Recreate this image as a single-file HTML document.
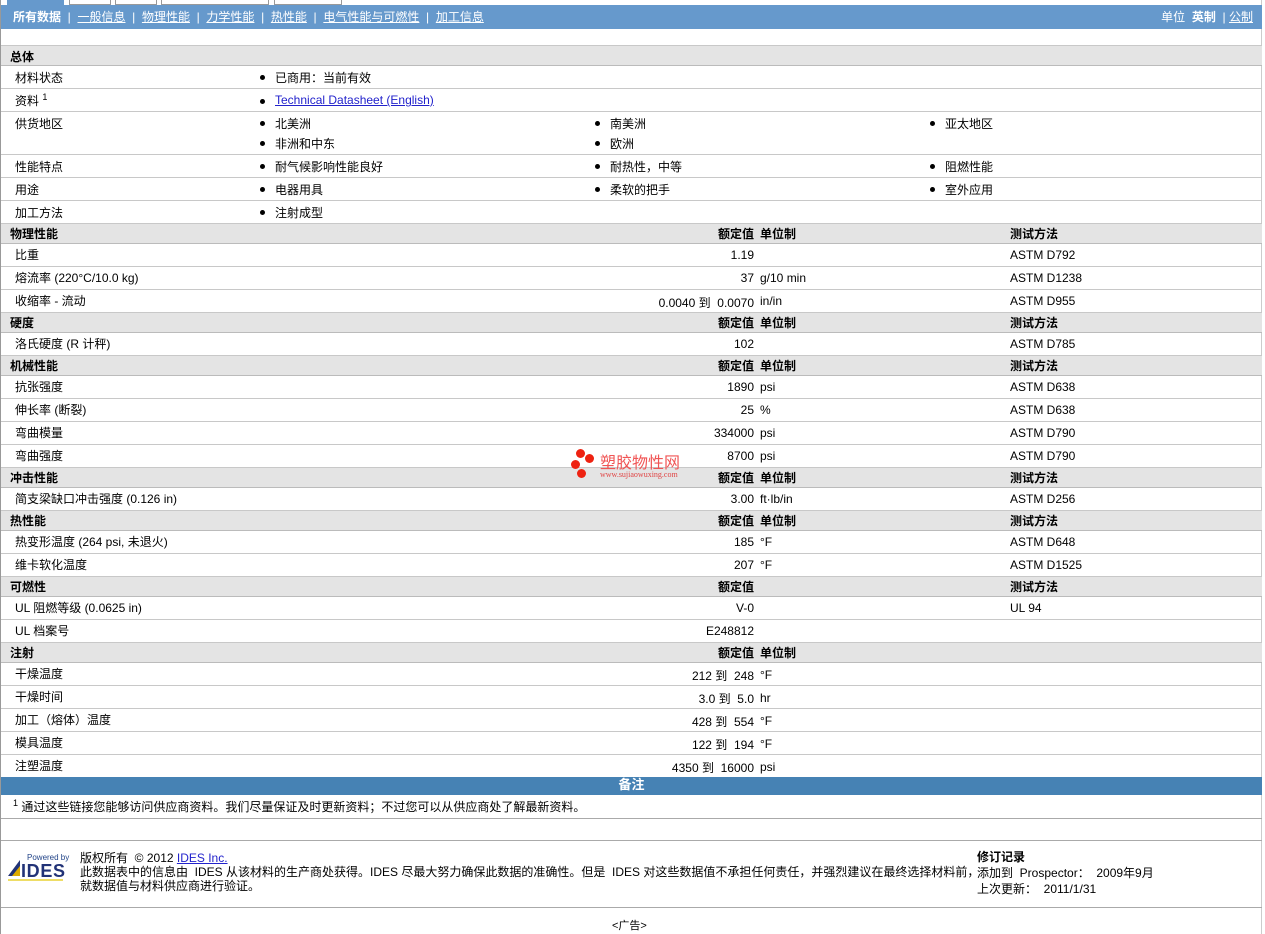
<!DOCTYPE html>
<html><head><meta charset="utf-8"><style>
*{margin:0;padding:0;box-sizing:border-box}
body{width:1265px;height:934px;background:#fff;font-family:"Liberation Sans","Noto Sans CJK SC",sans-serif;font-size:12px;color:#000;position:relative;overflow:hidden}
#wrap{position:absolute;left:0;top:0;width:1262px;height:934px;border-left:1px solid #999;border-right:1px solid #ccc}
.tab{position:absolute;top:0;height:5px;border:1px solid #999;border-top:none;background:#fff}
#nav{position:absolute;left:0;top:5px;width:1261px;height:24px;background:#6699cc;color:#fff;font-size:12px;line-height:24px}
#nav a{color:#fff;text-decoration:underline}
.r{position:absolute;left:0;width:1261px;border-bottom:1px solid #c8c8c8}
.h{background:#e4e4e4;font-weight:bold;border-top:1px solid #c8c8c8;border-bottom:1px solid #bbb}
.r span{position:absolute;white-space:nowrap}
.l{left:14px}.h .l{left:9px}
.v{right:508px;text-align:right}
.u{left:759px}.t{left:1009px}
.b{width:5px;height:5px;border-radius:50%;background:#000}
a{color:#2222cc}
</style></head><body><div id="wrap">
<div class="tab" style="left:6px;width:57px;background:#6699cc;border-color:#6699cc"></div>
<div class="tab" style="left:68px;width:42px"></div>
<div class="tab" style="left:114px;width:42px"></div>
<div class="tab" style="left:160px;width:108px"></div>
<div class="tab" style="left:273px;width:68px"></div>
<div id="nav"><span style="position:absolute;left:12px"><b>所有数据</b> &nbsp;| &nbsp;<a>一般信息</a> &nbsp;| &nbsp;<a>物理性能</a> &nbsp;| &nbsp;<a>力学性能</a> &nbsp;| &nbsp;<a>热性能</a> &nbsp;| &nbsp;<a>电气性能与可燃性</a> &nbsp;| &nbsp;<a>加工信息</a></span><span style="position:absolute;right:9px">单位 &nbsp;<b>英制</b> &nbsp;| <a>公制</a></span></div>

<div class="r h" style="top:45px;height:21px"><span class="l" style="top:2px">总体</span></div>
<div class="r" style="top:66px;height:23px"><span class="l" style="top:3px">材料状态</span><span class="b" style="left:259px;top:9px"></span><span style="left:274px;top:3px">已商用：当前有效</span></div>
<div class="r" style="top:89px;height:23px"><span class="l" style="top:3px">资料 <sup style="font-size:9px">1</sup></span><span class="b" style="left:259px;top:10px"></span><span style="left:274px;top:4px"><a style="text-decoration:underline">Technical Datasheet (English)</a></span></div>
<div class="r" style="top:112px;height:43px">
<span class="l" style="top:3px">供货地区</span>
<span class="b" style="left:259px;top:9px"></span><span style="left:274px;top:3px">北美洲</span>
<span class="b" style="left:594px;top:9px"></span><span style="left:609px;top:3px">南美洲</span>
<span class="b" style="left:929px;top:9px"></span><span style="left:944px;top:3px">亚太地区</span>
<span class="b" style="left:259px;top:29px"></span><span style="left:274px;top:23px">非洲和中东</span>
<span class="b" style="left:594px;top:29px"></span><span style="left:609px;top:23px">欧洲</span></div>
<div class="r" style="top:155px;height:23px"><span class="l" style="top:3px">性能特点</span><span class="b" style="left:259px;top:9px"></span><span style="left:274px;top:3px">耐气候影响性能良好</span><span class="b" style="left:594px;top:9px"></span><span style="left:609px;top:3px">耐热性，中等</span><span class="b" style="left:929px;top:9px"></span><span style="left:944px;top:3px">阻燃性能</span></div>
<div class="r" style="top:178px;height:23px"><span class="l" style="top:3px">用途</span><span class="b" style="left:259px;top:9px"></span><span style="left:274px;top:3px">电器用具</span><span class="b" style="left:594px;top:9px"></span><span style="left:609px;top:3px">柔软的把手</span><span class="b" style="left:929px;top:9px"></span><span style="left:944px;top:3px">室外应用</span></div>
<div class="r" style="top:201px;height:23px"><span class="l" style="top:3px">加工方法</span><span class="b" style="left:259px;top:9px"></span><span style="left:274px;top:3px">注射成型</span></div>

<div class="r h" style="top:223px;height:21px"><span class="l" style="top:1px">物理性能</span><span class="v" style="top:1px">额定值</span><span class="u" style="top:1px">单位制</span><span class="t" style="top:1px">测试方法</span></div>
<div class="r" style="top:244px;height:23px"><span class="l" style="top:2px">比重</span><span class="v" style="top:4px">1.19</span><span class="t" style="top:4px">ASTM D792</span></div>
<div class="r" style="top:267px;height:23px"><span class="l" style="top:2px">熔流率 (220°C/10.0 kg)</span><span class="v" style="top:4px">37</span><span class="u" style="top:4px">g/10 min</span><span class="t" style="top:4px">ASTM D1238</span></div>
<div class="r" style="top:290px;height:23px"><span class="l" style="top:2px">收缩率 - 流动</span><span class="v" style="top:4px">0.0040 到 &nbsp;0.0070</span><span class="u" style="top:4px">in/in</span><span class="t" style="top:4px">ASTM D955</span></div>

<div class="r h" style="top:312px;height:21px"><span class="l" style="top:1px">硬度</span><span class="v" style="top:1px">额定值</span><span class="u" style="top:1px">单位制</span><span class="t" style="top:1px">测试方法</span></div>
<div class="r" style="top:333px;height:23px"><span class="l" style="top:2px">洛氏硬度 (R 计秤)</span><span class="v" style="top:4px">102</span><span class="t" style="top:4px">ASTM D785</span></div>

<div class="r h" style="top:355px;height:21px"><span class="l" style="top:1px">机械性能</span><span class="v" style="top:1px">额定值</span><span class="u" style="top:1px">单位制</span><span class="t" style="top:1px">测试方法</span></div>
<div class="r" style="top:376px;height:23px"><span class="l" style="top:2px">抗张强度</span><span class="v" style="top:4px">1890</span><span class="u" style="top:4px">psi</span><span class="t" style="top:4px">ASTM D638</span></div>
<div class="r" style="top:399px;height:23px"><span class="l" style="top:2px">伸长率 (断裂)</span><span class="v" style="top:4px">25</span><span class="u" style="top:4px">%</span><span class="t" style="top:4px">ASTM D638</span></div>
<div class="r" style="top:422px;height:23px"><span class="l" style="top:2px">弯曲模量</span><span class="v" style="top:4px">334000</span><span class="u" style="top:4px">psi</span><span class="t" style="top:4px">ASTM D790</span></div>
<div class="r" style="top:445px;height:23px"><span class="l" style="top:2px">弯曲强度</span><span class="v" style="top:4px">8700</span><span class="u" style="top:4px">psi</span><span class="t" style="top:4px">ASTM D790</span></div>

<div class="r h" style="top:467px;height:21px"><span class="l" style="top:1px">冲击性能</span><span class="v" style="top:1px">额定值</span><span class="u" style="top:1px">单位制</span><span class="t" style="top:1px">测试方法</span></div>
<div class="r" style="top:488px;height:23px"><span class="l" style="top:2px">简支梁缺口冲击强度 (0.126 in)</span><span class="v" style="top:4px">3.00</span><span class="u" style="top:4px">ft·lb/in</span><span class="t" style="top:4px">ASTM D256</span></div>

<div class="r h" style="top:510px;height:21px"><span class="l" style="top:1px">热性能</span><span class="v" style="top:1px">额定值</span><span class="u" style="top:1px">单位制</span><span class="t" style="top:1px">测试方法</span></div>
<div class="r" style="top:531px;height:23px"><span class="l" style="top:2px">热变形温度 (264 psi, 未退火)</span><span class="v" style="top:4px">185</span><span class="u" style="top:4px">°F</span><span class="t" style="top:4px">ASTM D648</span></div>
<div class="r" style="top:554px;height:23px"><span class="l" style="top:2px">维卡软化温度</span><span class="v" style="top:4px">207</span><span class="u" style="top:4px">°F</span><span class="t" style="top:4px">ASTM D1525</span></div>

<div class="r h" style="top:576px;height:21px"><span class="l" style="top:1px">可燃性</span><span class="v" style="top:1px">额定值</span><span class="t" style="top:1px">测试方法</span></div>
<div class="r" style="top:597px;height:23px"><span class="l" style="top:2px">UL 阻燃等级 (0.0625 in)</span><span class="v" style="top:4px">V-0</span><span class="t" style="top:4px">UL 94</span></div>
<div class="r" style="top:620px;height:23px"><span class="l" style="top:2px">UL 档案号</span><span class="v" style="top:4px">E248812</span></div>

<div class="r h" style="top:642px;height:21px"><span class="l" style="top:1px">注射</span><span class="v" style="top:1px">额定值</span><span class="u" style="top:1px">单位制</span></div>
<div class="r" style="top:663px;height:23px"><span class="l" style="top:2px">干燥温度</span><span class="v" style="top:4px">212 到 &nbsp;248</span><span class="u" style="top:5px">°F</span></div>
<div class="r" style="top:686px;height:23px"><span class="l" style="top:2px">干燥时间</span><span class="v" style="top:4px">3.0 到 &nbsp;5.0</span><span class="u" style="top:5px">hr</span></div>
<div class="r" style="top:709px;height:23px"><span class="l" style="top:2px">加工（熔体）温度</span><span class="v" style="top:4px">428 到 &nbsp;554</span><span class="u" style="top:5px">°F</span></div>
<div class="r" style="top:732px;height:23px"><span class="l" style="top:2px">模具温度</span><span class="v" style="top:4px">122 到 &nbsp;194</span><span class="u" style="top:5px">°F</span></div>
<div class="r" style="top:755px;height:22px;border:none"><span class="l" style="top:2px">注塑温度</span><span class="v" style="top:4px">4350 到 &nbsp;16000</span><span class="u" style="top:5px">psi</span></div>

<div class="r" style="top:777px;height:18px;background:#4682b4;color:#fff;font-weight:bold;font-size:13px;text-align:center;line-height:16px;border:none">备注</div>
<div class="r" style="top:795px;height:24px;border-bottom:1px solid #aaa"><span style="left:12px;top:3px"><sup style="font-size:9px">1</sup> 通过这些链接您能够访问供应商资料。我们尽量保证及时更新资料；不过您可以从供应商处了解最新资料。</span></div>
<div class="r" style="top:819px;height:22px;border-bottom:1px solid #aaa"></div>
<div class="r" style="top:841px;height:67px;border-bottom:1px solid #aaa">
<svg style="position:absolute;left:6px;top:10px" width="64" height="32" viewBox="0 0 64 32"><text x="20" y="9" font-family="Liberation Sans" font-size="8" fill="#224488">Powered by</text><polygon points="1,25 13,9 13,25" fill="#223377"/><polygon points="5,25 13,15 13,25" fill="#ddaa00"/><text x="14" y="26" font-family="Liberation Sans" font-size="18" font-weight="bold" fill="#223377" textLength="44">IDES</text><rect x="1" y="28" width="55" height="2" fill="#eedd66"/></svg>
<span style="left:79px;top:10px;line-height:14px">版权所有 &nbsp;© 2012 <a style="text-decoration:underline">IDES Inc.</a><br>此数据表中的信息由 &nbsp;IDES 从该材料的生产商处获得。IDES 尽最大努力确保此数据的准确性。但是 &nbsp;IDES 对这些数据值不承担任何责任，并强烈建议在最终选择材料前，<br>就数据值与材料供应商进行验证。</span>
<span style="left:976px;top:8px;line-height:16px"><b>修订记录</b><br>添加到 &nbsp;Prospector： &nbsp;2009年9月<br>上次更新： &nbsp;2011/1/31</span></div>
<div style="position:absolute;left:611px;top:917px;font-size:11px">&lt;广告&gt;</div>

<div style="position:absolute;left:569px;top:449px;width:130px;height:36px">
<div style="position:absolute;left:6px;top:0;width:9px;height:9px;border-radius:50%;background:#e21"></div>
<div style="position:absolute;left:15px;top:5px;width:9px;height:9px;border-radius:50%;background:#e21"></div>
<div style="position:absolute;left:1px;top:11px;width:9px;height:9px;border-radius:50%;background:#e21"></div>
<div style="position:absolute;left:7px;top:20px;width:9px;height:9px;border-radius:50%;background:#e21"></div>
<span style="position:absolute;left:30px;top:0;font-size:16px;color:#f05555;white-space:nowrap">塑胶物性网</span>
<span style="position:absolute;left:30px;top:21px;font-size:8px;color:#e04444;font-family:'Liberation Serif',serif;white-space:nowrap">www.sujiaowuxing.com</span>
</div>
</div></body></html>
